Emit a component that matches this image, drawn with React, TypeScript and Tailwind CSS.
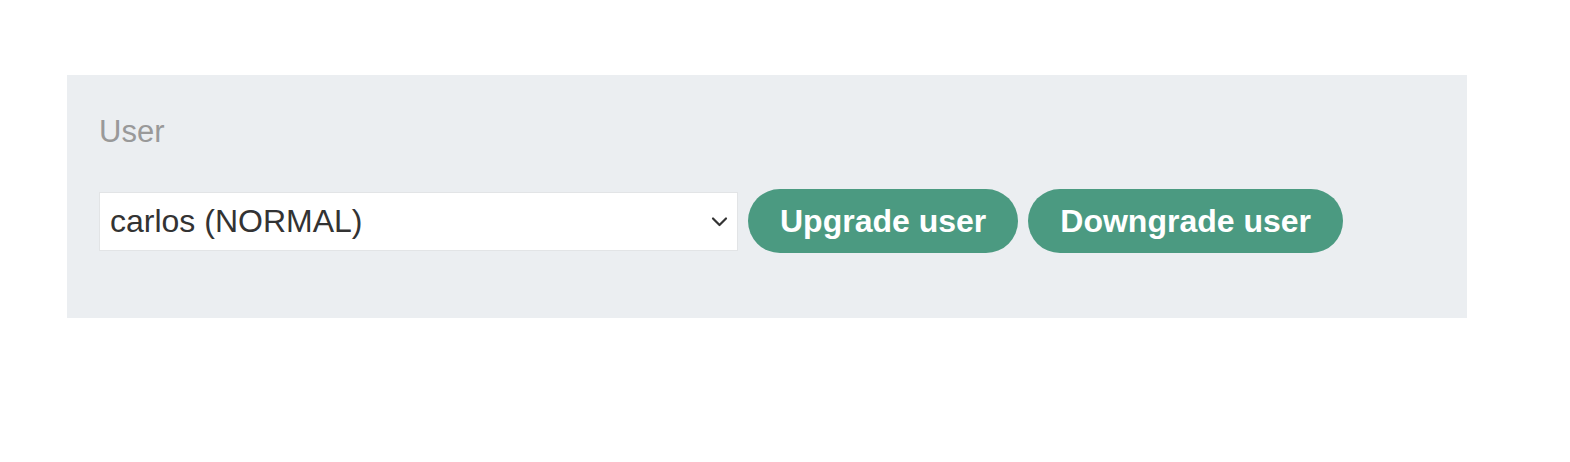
import React, { useState } from 'react';

const users = ['carlos (NORMAL)', 'wiener (NORMAL)', 'administrator (ADMIN)'];

const App: React.FC = () => {
  const [user, setUser] = useState(users[0]);

  return (
    <div className="min-h-screen bg-white pt-[75px] pl-[67px] font-['Liberation_Sans',Arial,sans-serif]">
      {/* panel */}
      <div className="w-[1400px] h-[243px] bg-[#ebeef1] pl-[32px] pt-[39px]">
        <label className="block text-[31px] leading-[36px] text-[#999999]">User</label>

        <div className="flex items-center gap-[10px] mt-[39px]">
          {/* select */}
          <div className="relative w-[639px] h-[59px]">
            <select
              value={user}
              onChange={(e) => setUser(e.target.value)}
              className="w-full h-full appearance-none bg-white border border-[#e2e4e6] pl-[10px] pr-[40px] text-[32px] text-[#333333] outline-none font-['Liberation_Sans',Arial,sans-serif]"
            >
              {users.map((u) => (
                <option key={u}>{u}</option>
              ))}
            </select>
            <svg
              className="absolute right-[10px] top-[24px] pointer-events-none"
              width="17"
              height="11"
              viewBox="0 0 17 11"
              fill="none"
            >
              <path d="M2 2.5 L8.5 9 L15 2.5" stroke="#333333" strokeWidth="2.2" strokeLinecap="round" strokeLinejoin="round" />
            </svg>
          </div>

          <button className="h-[64px] px-[32px] rounded-full bg-[#4b9a81] text-white text-[32px] font-bold leading-none">
            Upgrade user
          </button>
          <button className="h-[64px] px-[32px] rounded-full bg-[#4b9a81] text-white text-[32px] font-bold leading-none">
            Downgrade user
          </button>
        </div>
      </div>
    </div>
  );
};

export default App;
